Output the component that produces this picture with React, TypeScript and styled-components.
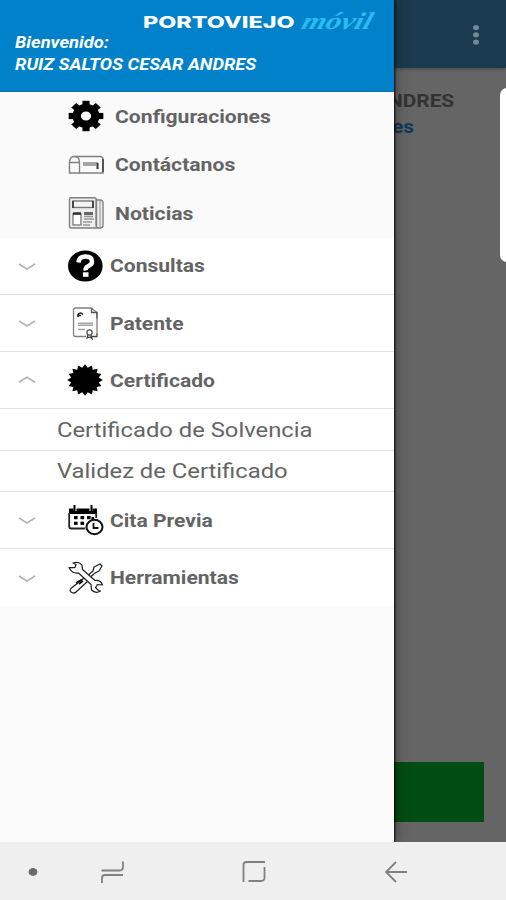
import React from "react";
import styled, { createGlobalStyle } from "styled-components";

const GlobalStyle = createGlobalStyle`
  * { box-sizing: border-box; }
  body { margin: 0; background: #656565; font-family: Roboto, "Liberation Sans", sans-serif; }
`;

const Screen = styled.div`
  position: relative;
  width: 506px;
  height: 900px;
  overflow: hidden;
  display: flex;
  flex-direction: column;
`;

const Page = styled.main`
  flex: 1;
  display: flex;
  flex-direction: column;
  align-items: flex-end;
  background: #656565;
`;

const AppBar = styled.header`
  width: 100%;
  height: 68px;
  padding: 2px 22px 0 0;
  display: flex;
  align-items: center;
  justify-content: flex-end;
  background: #1a3b4f;
  box-shadow: 0 1px 3px rgba(0, 0, 0, 0.3);
`;

const UserName = styled.div`
  margin: 21px 52px 0 0;
  font-size: 18px;
  line-height: 24px;
  font-weight: 700;
  color: #333;
  transform: scaleX(1.16);
  transform-origin: right;
  white-space: nowrap;
`;

const UserMail = styled(UserName)`
  margin: 2px 92px 0 0;
  color: #0d3a58;
`;

const ActionButton = styled.div`
  width: 460px;
  height: 60px;
  margin: auto 22px 20px 0;
  background: #004c12;
`;

const EdgePanel = styled.div`
  position: absolute;
  top: 88px;
  right: -8px;
  width: 14px;
  height: 174px;
  border-radius: 8px;
  background: #fff;
`;

const Drawer = styled.aside`
  position: absolute;
  inset: 0 auto 58px 0;
  width: 394px;
  background: #fbfbfb;
  box-shadow: 1px 0 2px rgba(0, 0, 0, 0.9), 3px 0 12px rgba(0, 0, 0, 0.28);
`;

const DrawerHeader = styled.div`
  height: 92px;
  padding: 10px 17px 0 14.5px;
  background: #0081ca;
  border-bottom: 1px solid #0872b4;
  color: #fff;
`;

const Brand = styled.div`
  height: 22px;
  display: flex;
  justify-content: flex-end;
  align-items: center;
`;

const BrandName = styled.span<{ $scale: number }>`
  font: 800 16px/23px Inter, sans-serif;
  width: 152px;
  margin: 2px 8px 0 0;
  white-space: nowrap;
  transform: scaleX(${(p) => p.$scale});
  transform-origin: left;
`;

const BrandScript = styled.span<{ $scale: number }>`
  font: italic 700 24px/22px "Liberation Serif", serif;
  width: 74px;
  color: #29bcf5;
  white-space: nowrap;
  transform: scaleX(${(p) => p.$scale}) skewX(-14deg);
  transform-origin: left;
`;

const Greeting = styled.div<{ $scale: number }>`
  width: max-content;
  font-size: 16px;
  line-height: 22px;
  font-weight: 700;
  font-style: italic;
  transform: scaleX(${(p) => p.$scale});
  transform-origin: left;
`;

const Row = styled.div<{ $kind: "plain" | "group" | "last" }>`
  height: ${(p) => (p.$kind === "plain" ? 48.6 : p.$kind === "group" ? 57.2 : 56.5)}px;
  padding-left: 16px;
  display: flex;
  align-items: center;
  background: ${(p) => (p.$kind === "plain" ? "#fafafa" : "#fff")};
  border-bottom: ${(p) => (p.$kind === "group" ? "1.5px solid #e2e2e2" : "0")};
`;

const ArrowSlot = styled.div`
  width: 50px;
  height: 22px;
`;

const IconSlot = styled.div<{ $gap: number }>`
  width: 38px;
  height: 36px;
  margin-right: ${(p) => p.$gap}px;
`;

const Label = styled.span<{ $scale: number }>`
  font-size: 18px;
  font-weight: 700;
  color: #646464;
  white-space: nowrap;
  transform: scaleX(${(p) => p.$scale});
  transform-origin: left;
`;

const SubRow = styled.div`
  height: 41.4px;
  padding: 1px 0 0 57px;
  display: flex;
  align-items: center;
  background: #fff;
  border-bottom: 1.5px solid #e0e0e0;
`;

const SubLabel = styled(Label)`
  font-size: 21px;
  font-weight: 400;
`;

const NavBar = styled.nav`
  position: relative;
  height: 58px;
  padding-top: 1px;
  background: #efefef;
  display: grid;
  grid-template-columns: 66px 94px 188px 96px;
  align-items: center;
  justify-items: center;
`;

const Arrow = ({ up }: { up?: boolean }) => (
  <ArrowSlot>
    <svg width="22" height="22" viewBox="0 0 22 22" fill="none" stroke="#b4b4b4" strokeWidth="1.7">
      <path d={up ? "M3 13.2 11 8.2l8 5" : "M3 9l8 5 8-5"} />
    </svg>
  </ArrowSlot>
);

const teeth = (count: number, outer: number, inner: number) =>
  Array.from({ length: count * 2 }, (_, i) => {
    const a = (i * Math.PI) / count - Math.PI / 2 + Math.PI / count;
    const r = i % 2 ? outer : inner;
    return `${19 + Math.cos(a) * r * 1.13},${18 + Math.sin(a) * r}`;
  }).join(" ");

const icons: Record<string, React.ReactNode> = {
  gear: (
    <g transform="translate(20 18) scale(1.14 1)">
      <circle r="8.2" fill="none" stroke="#000" strokeWidth="7.4" />
      {[0, 45, 90, 135, 180, 225, 270, 315].map((r) => (
        <rect key={r} x="-3.1" y="-15.2" width="6.2" height="5" transform={`rotate(${r})`} />
      ))}
    </g>
  ),
  mailbox: (
    <g fill="none" stroke="#808080" strokeWidth="1.4">
      <path d="M3.5 26V14.5Q4 9.5 8.5 9.5T13.5 14.5V26H3.5V15.5H13.5" />
      <path d="M8.5 9.5H34Q37 9.5 37 12.500V26H13.500" />
      <path d="M37 12v13" stroke="#333" />
      <path d="M17 16h15M17 18h13" strokeWidth="1.500" stroke="#888" />
      <path d="M31.500 16v6" stroke="#333" strokeWidth="2" />
    </g>
  ),
  news: (
    <g fill="none" stroke="#808080" strokeWidth="1.4">
      <path d="M30.500 30.500V4.500Q30 2.700 28 2.700H5Q3.500 2.700 3.500 5v26q0 2 2 2H34q3 0 3-3V8q0-3-3-3h-4v25q0 3 3 3" fill="#eee" />
      <path d="M34 6v26" stroke="#aaa" />
      <rect x="7" y="6" width="20" height="6.500" fill="#f4f4f4" stroke="#777" />
      <path d="M7 6v7m20-7v7" stroke="#333" strokeWidth="1.600" />
      <rect x="7" y="19" width="8" height="11" fill="#fff" />
      <path d="M7 18.500h8" stroke="#333" strokeWidth="2.500" />
      <path d="M18 18.500h9" stroke="#666" strokeWidth="3" />
      <path d="M18 21.500h9M18 24h10M17 27h9M17 30h7" stroke="#999" />
    </g>
  ),
  help: (
    <>
      <ellipse cx="19.300" cy="18" rx="17.300" ry="15.500" />
      <path d="M12.500 14.500Q13 8.500 19.500 8.500T26 13.500Q26 16.500 22.500 18T19.800 22.500" fill="none" stroke="#fff" strokeWidth="4.500" />
      <rect x="17" y="24.300" width="5.500" height="4.500" fill="#fff" />
    </>
  ),
  document: (
    <g fill="none" stroke="#808080" strokeWidth="1.300">
      <path d="M20 31.500H9.500Q7.500 31.500 7.500 29.500V5Q7.500 3 9.500 3H25L31 7.500V27" />
      <path d="M25.500 3v4.500H31v6" stroke="#555" />
      <path d="M12 12V9.500q2.500-3 5 0M12 10.500h3" stroke="#222" strokeWidth="1.600" />
      <path d="M12 18.300h15M12 20.300h15M12 24.500h7" stroke="#a5a5a5" strokeWidth="1.400" />
      <circle cx="23.500" cy="27.500" r="2.600" stroke="#555" />
      <path d="m22 30-1 3 3-1 2 1.500-1-3.500M26 31.500h5v-4" stroke="#444" />
    </g>
  ),
  seal: <polygon points={teeth(16, 15.8, 12.4)} />,
  calendar: (
    <>
      <path d="M3 6.500h4.500v2.500h3V6.500h13v2.500h3V6.500H31v5.500H3z" />
      <path d="M8.500 3v6M25.500 3v6" stroke="#000" strokeWidth="2" />
      <path d="M3.200 11v13.500q0 2 2 2h14M30.200 11v5" fill="none" stroke="#222" strokeWidth="1.800" />
      {[8, 14.5, 21].map((x) => <rect key={x} x={x} y="14" width="3.600" height="3.200" />)}
      {[8, 14.5].map((x) => <rect key={x} x={x} y="19.700" width="3.600" height="3.200" />)}
      <path d="M25.500 15h2.500v2h-2.500z" />
      <ellipse cx="28.500" cy="25" rx="8" ry="7.200" fill="#fff" stroke="#111" strokeWidth="2" />
      <path d="M27.500 21v5h5" fill="none" stroke="#111" strokeWidth="1.800" />
    </>
  ),
  tools: (
    <g stroke="#222" strokeWidth="1.250" fill="#fff" strokeLinejoin="round">
      <path d="m18 18 4 3-12 11q-2 2-5 0-2-2 .5-4z" />
      <path d="m20 17 7-6 1-4 6-3 2 2-3 5-4 2-7 6z" />
      <path d="M3 7.500h6l1-3-3-1.500q6-2 9 2l.5 4.500L29 20.500q6-.5 7.500 4.500l-5-.5-2 3 3 3 2 .5q-5 3-9-1l-.5-5.500L12.500 13Q6 14 3 7.500z" />
      <path d="m10 23 6-3.500M13 24l4-3" stroke="#111" strokeWidth="1.700" />
    </g>
  ),
};

const Icon = ({ name, gap }: { name: string; gap: number }) => (
  <IconSlot $gap={gap}>
    <svg width="38" height="36" viewBox="0 0 38 36">{icons[name]}</svg>
  </IconSlot>
);

const shortcuts = [
  { icon: "gear", text: "Configuraciones" },
  { icon: "mailbox", text: "Contáctanos" },
  { icon: "news", text: "Noticias" },
];

const Group = ({ icon, text, up, last }: { icon: string; text: string; up?: boolean; last?: boolean }) => (
  <Row $kind={last ? "last" : "group"}>
    <Arrow up={up} />
    <Icon name={icon} gap={6.4} />
    <Label $scale={1.17}>{text}</Label>
  </Row>
);

export default function App() {
  return (
    <Screen>
      <GlobalStyle />
      <Page>
        <AppBar>
          <svg width="16" height="26" viewBox="0 0 16 26" fill="#748791">
            <ellipse cx="8" cy="5.500" rx="3" ry="2.600" />
            <ellipse cx="8" cy="12.800" rx="3" ry="2.600" />
            <ellipse cx="8" cy="20.100" rx="3" ry="2.600" />
          </svg>
        </AppBar>
        <UserName>ANDRES</UserName>
        <UserMail>es</UserMail>
        <ActionButton />
      </Page>
      <EdgePanel />
      <Drawer>
        <DrawerHeader>
          <Brand>
            <BrandName $scale={1.46}>PORTOVIEJO</BrandName>
            <BrandScript $scale={1.27}>móvil</BrandScript>
          </Brand>
          <Greeting $scale={1.145}>Bienvenido:</Greeting>
          <Greeting $scale={1.145}>RUIZ SALTOS CESAR ANDRES</Greeting>
        </DrawerHeader>
        {shortcuts.map((s) => (
          <Row key={s.icon} $kind="plain">
            <ArrowSlot />
            <Icon name={s.icon} gap={10.6} />
            <Label $scale={1.175}>{s.text}</Label>
          </Row>
        ))}
        <Group icon="help" text="Consultas" />
        <Group icon="document" text="Patente" />
        <Group icon="seal" text="Certificado" up />
        <SubRow><SubLabel $scale={1.133}>Certificado de Solvencia</SubLabel></SubRow>
        <SubRow><SubLabel $scale={1.133}>Validez de Certificado</SubLabel></SubRow>
        <Group icon="calendar" text="Cita Previa" />
        <Group icon="tools" text="Herramientas" last />
      </Drawer>
      <NavBar>
        <svg width="12" height="12"><ellipse cx="6" cy="6" rx="4.400" ry="3.900" fill="#6b6b6b" /></svg>
        <svg width="26" height="26" fill="none" stroke="#808080" strokeWidth="1.800">
          <path d="M1.500 11.500H19.500Q23 11.500 23 8V2.500M23 16H5Q2 16 2 19v5" />
        </svg>
        <svg width="26" height="26" fill="none" stroke="#808080" strokeWidth="1.800">
          <path d="M2.500 23V6q0-3 3-3H24M7.500 22H20q3.500 0 3.500-3.500V8" />
        </svg>
        <svg width="26" height="26" fill="none" stroke="#808080" strokeWidth="1.800">
          <path d="M24 13H3M13 3 3 13l10 10" />
        </svg>
      </NavBar>
    </Screen>
  );
}
